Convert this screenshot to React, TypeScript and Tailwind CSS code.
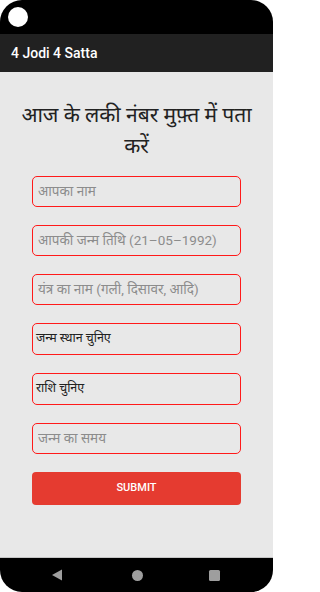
import { useState } from "react";

const FIELDS = [
  { kind: "input", label: "आपका नाम" },
  { kind: "input", label: "आपकी जन्म तिथि (21–05–1992)" },
  { kind: "input", label: "यंत्र का नाम (गली, दिसावर, आदि)" },
  { kind: "select", label: "जन्म स्थान चुनिए" },
  { kind: "select", label: "राशि चुनिए" },
  { kind: "input", label: "जन्म का समय" },
];

export default function App() {
  const [values, setValues] = useState<Record<number, string>>({});

  return (
    <div className="h-[592px] w-[273px] bg-white font-['Roboto','Noto_Sans',sans-serif]">
      <div className="flex h-full flex-col overflow-hidden rounded-[22px] bg-black">
        {/* status bar */}
        <div className="flex h-[34px] shrink-0 items-center pl-[8px]">
          <span className="h-[20px] w-[20px] rounded-full bg-white" />
        </div>

        {/* app bar */}
        <div className="flex h-[38px] shrink-0 items-center bg-[#212121] px-[11px]">
          <span className="text-[14px] font-medium text-white">4 Jodi 4 Satta</span>
        </div>

        <main className="flex flex-1 flex-col items-center border-b border-[#c4c4c4] bg-[#e8e8e8] pt-[28px]">
          <h1 className="px-[16px] text-center text-[21px] leading-[31px] text-[#222]">
            आज के लकी नंबर मुफ़्त में पता करें
          </h1>

          <form
            className="mt-[14px] flex w-[209px] flex-col gap-[18.5px]"
            onSubmit={(e) => e.preventDefault()}
          >
            {FIELDS.map((f, i) =>
              f.kind === "input" ? (
                <input
                  key={i}
                  value={values[i] ?? ""}
                  onChange={(e) => setValues({ ...values, [i]: e.target.value })}
                  placeholder={f.label}
                  className="h-[30.5px] rounded-[5px] border-[1.5px] border-[#ff1a1a] bg-transparent px-[5px] text-[13.5px] text-[#333] outline-none placeholder:text-[#8c8c8c]"
                />
              ) : (
                <button
                  key={i}
                  type="button"
                  className="flex h-[31.5px] items-center rounded-[5px] border-[1.5px] border-[#ff1a1a] px-[3px] text-left text-[12.5px] text-[#222]"
                >
                  {f.label}
                </button>
              )
            )}
            <button
              type="submit"
              className="mt-[-0.5px] h-[33px] rounded-[4px] bg-[#e53b30] text-[11px] font-medium text-white"
            >
              SUBMIT
            </button>
          </form>
        </main>

        {/* navigation bar */}
        <div className="flex h-[34px] shrink-0 items-center pl-[52px]">
          <svg width="10" height="12" viewBox="0 0 10 12">
            <path d="M10 0.5 L10 11.5 L0 6 Z" fill="#9e9e9e" />
          </svg>
          <span className="ml-[70px] h-[11px] w-[11px] rounded-full bg-[#9e9e9e]" />
          <span className="ml-[66px] h-[11px] w-[11px] rounded-[1.5px] bg-[#9e9e9e]" />
        </div>
      </div>
    </div>
  );
}
